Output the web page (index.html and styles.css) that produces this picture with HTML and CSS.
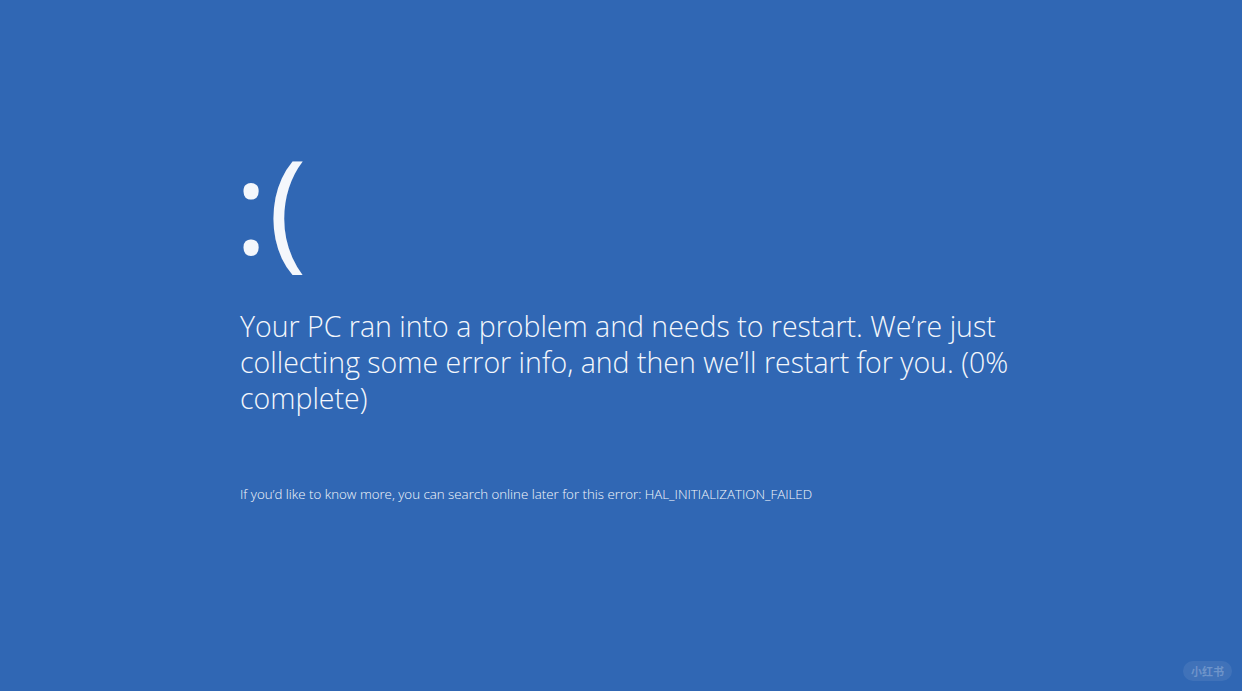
FILE: index.html
```html
<!DOCTYPE html>
<html lang="en-US">
<head>
<meta charset="UTF-8" />
<title>Your PC ran into a problem</title>
<link rel="stylesheet" href="styles.css">
</head>
<body>
    <div class="screen">
        <div class="face">:(</div>
        <p class="message">Your PC ran into a problem and needs to restart. We’re just collecting some error info, and then we’ll restart for you. (0% complete)</p>
        <p class="details">If you’d like to know more, you can search online later for this error: HAL_INITIALIZATION_FAILED</p>
    </div>
    <div class="watermark">小红书</div>
</body>
</html>
```

FILE: styles.css
```css
*{
    font-family: "Open Sans", "Noto Sans", sans-serif;
    box-sizing: border-box;
}
html, body{
    margin: 0;
    padding: 0;
    height: 100%;
}
body{
    background-color: #3067b4;
    color: #f4f7fc;
    position: relative;
    overflow: hidden;
}
.screen{
    display: flex;
    flex-direction: column;
    padding: 134px 0 0 236px;
}
.face{
    margin-left: -2px;
    font-size: 130px;
    font-weight: 400;
    line-height: 140px;
}
.message{
    width: 820px;
    margin: 34px 0 0 4px;
    font-size: 28.5px;
    font-weight: 300;
    line-height: 36px;
}
.details{
    margin: 69px 0 0 4px;
    font-size: 13.3px;
    font-weight: 300;
}
.watermark{
    position: absolute;
    right: 10px;
    bottom: 10px;
    padding: 2px 8px;
    border-radius: 11px;
    background-color: rgba(255, 255, 255, 0.08);
    color: rgba(255, 255, 255, 0.25);
    font-family: "Noto Sans CJK SC", sans-serif;
    font-size: 11px;
    font-weight: 700;
}
```
